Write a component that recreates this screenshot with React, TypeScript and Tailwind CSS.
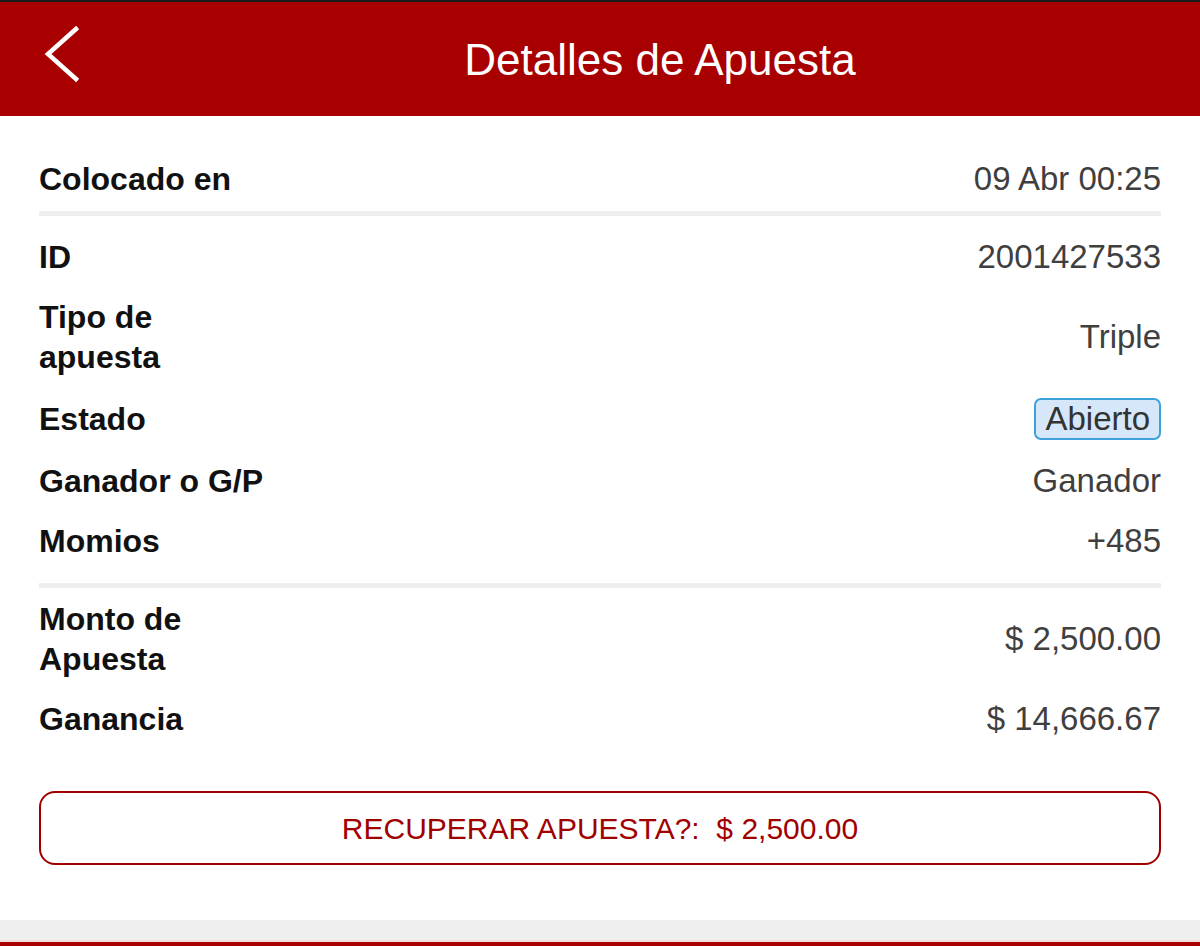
import React from "react";

const font = { fontFamily: '"Liberation Sans", Arial, Helvetica, sans-serif' };

function Row({ label, value, className = "" }: { label: React.ReactNode; value: React.ReactNode; className?: string }) {
  return (
    <div className={`flex items-center justify-between py-[10px] ${className}`}>
      <div className="font-bold text-[32px] leading-[40px] text-[#111]">{label}</div>
      <div className="text-[33px] leading-[40px] text-[#3f3f3f]">{value}</div>
    </div>
  );
}

export default function App() {
  return (
    <div className="w-[1200px] h-[946px] bg-white flex flex-col overflow-hidden" style={font}>
      <div className="h-[2px] bg-[#1a1a1a]" />
      <div className="h-[114px] bg-[#a80000] flex items-center">
        <div className="w-[120px] h-full flex items-center">
          <svg width="120" height="114" viewBox="0 0 120 114">
            <polyline points="76,27 48,52 76,77" fill="none" stroke="white" strokeWidth="4.5" strokeLinecap="square" strokeLinejoin="miter" />
          </svg>
        </div>
        <div className="flex-1 text-center text-white text-[44px] leading-none pt-[2px]">Detalles de Apuesta</div>
      </div>
      <div className="flex-1 flex flex-col px-[39px] pt-[33px]">
        <Row label="Colocado en" value="09 Abr 00:25" />
        <div className="mt-[2px] h-[5px] bg-[#eeeeee]" />
        <Row className="mt-[11px]" label="ID" value="2001427533" />
        <Row label={<>Tipo de<br />apuesta</>} value="Triple" />
        <div className="flex items-center justify-between h-[64px]">
          <div className="font-bold text-[32px] leading-[40px] text-[#111]">Estado</div>
          <div className="text-[33px] leading-[38px] text-[#333] bg-[#d5e7f8] border-2 border-[#3da2d9] rounded-[7px] px-[9px] h-[42px] flex items-center">Abierto</div>
        </div>
        <Row label="Ganador o G/P" value="Ganador" />
        <Row label="Momios" value="+485" />
        <div className="mt-[12px] h-[5px] bg-[#eeeeee]" />
        <Row className="mt-[1px]" label={<>Monto de<br />Apuesta</>} value="$ 2,500.00" />
        <Row label="Ganancia" value="$ 14,666.67" />
        <div className="mt-[42px] h-[74px] border-2 border-[#a00000] rounded-[16px] flex items-center justify-center">
          <span className="text-[#a00000] text-[30px] whitespace-pre">RECUPERAR APUESTA?:  $ 2,500.00</span>
        </div>
        <div className="flex-1" />
      </div>
      <div className="h-[20px] bg-[#efefef]" />
      <div className="h-[2px] bg-[#f6dede]" />
      <div className="h-[4px] bg-[#a80000]" />
    </div>
  );
}
